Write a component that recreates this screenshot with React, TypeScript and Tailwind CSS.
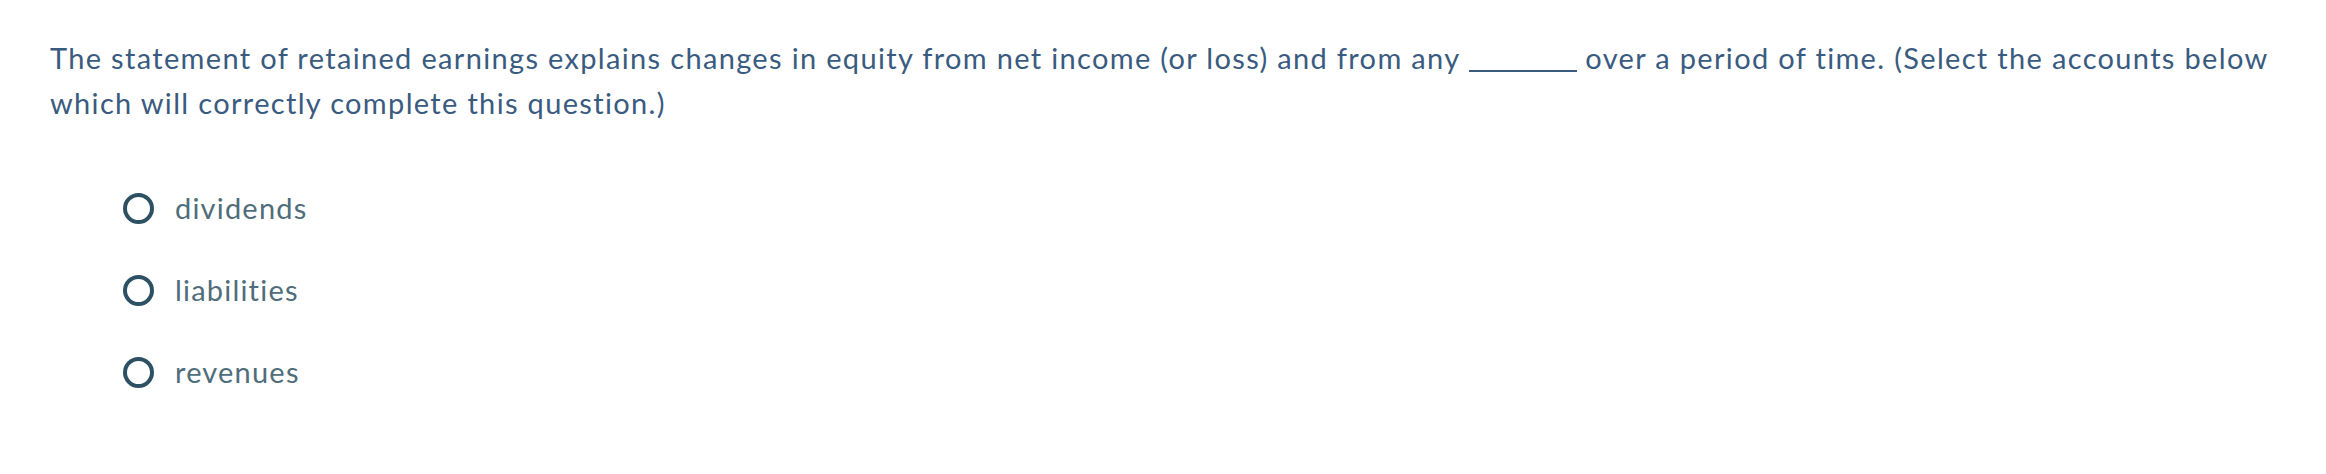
import React from "react";

const options = ["dividends", "liabilities", "revenues"];

export default function App() {
  return (
    <div className="min-h-screen w-full bg-white" style={{ fontFamily: "Lato, 'Open Sans', sans-serif" }}>
      <div className="pl-[50px] pr-[20px] pt-[35px]">
        <p className="text-[29px] leading-[45px] tracking-[1.33px] text-[#3a5b80]">
          The statement of retained earnings explains changes in equity from net income (or loss) and from any{" "}
          <span className="inline-block w-[108px] border-b-2 border-[#3a5b80] align-baseline translate-y-[3px]"></span>{" "}
          over a period of time. (Select the accounts below
          <br />
          which will correctly complete this question.)
        </p>
        <div className="mt-[67px] flex flex-col gap-[50px] pl-[73px]">
          {options.map((o) => (
            <label key={o} className="flex items-center gap-[21px] cursor-pointer">
              <span className="inline-block h-[31px] w-[31px] rounded-full border-[4px] border-[#2d5062]"></span>
              <span className="text-[29px] leading-[32px] tracking-[1.2px] text-[#4f6d7a]">{o}</span>
            </label>
          ))}
        </div>
      </div>
    </div>
  );
}
